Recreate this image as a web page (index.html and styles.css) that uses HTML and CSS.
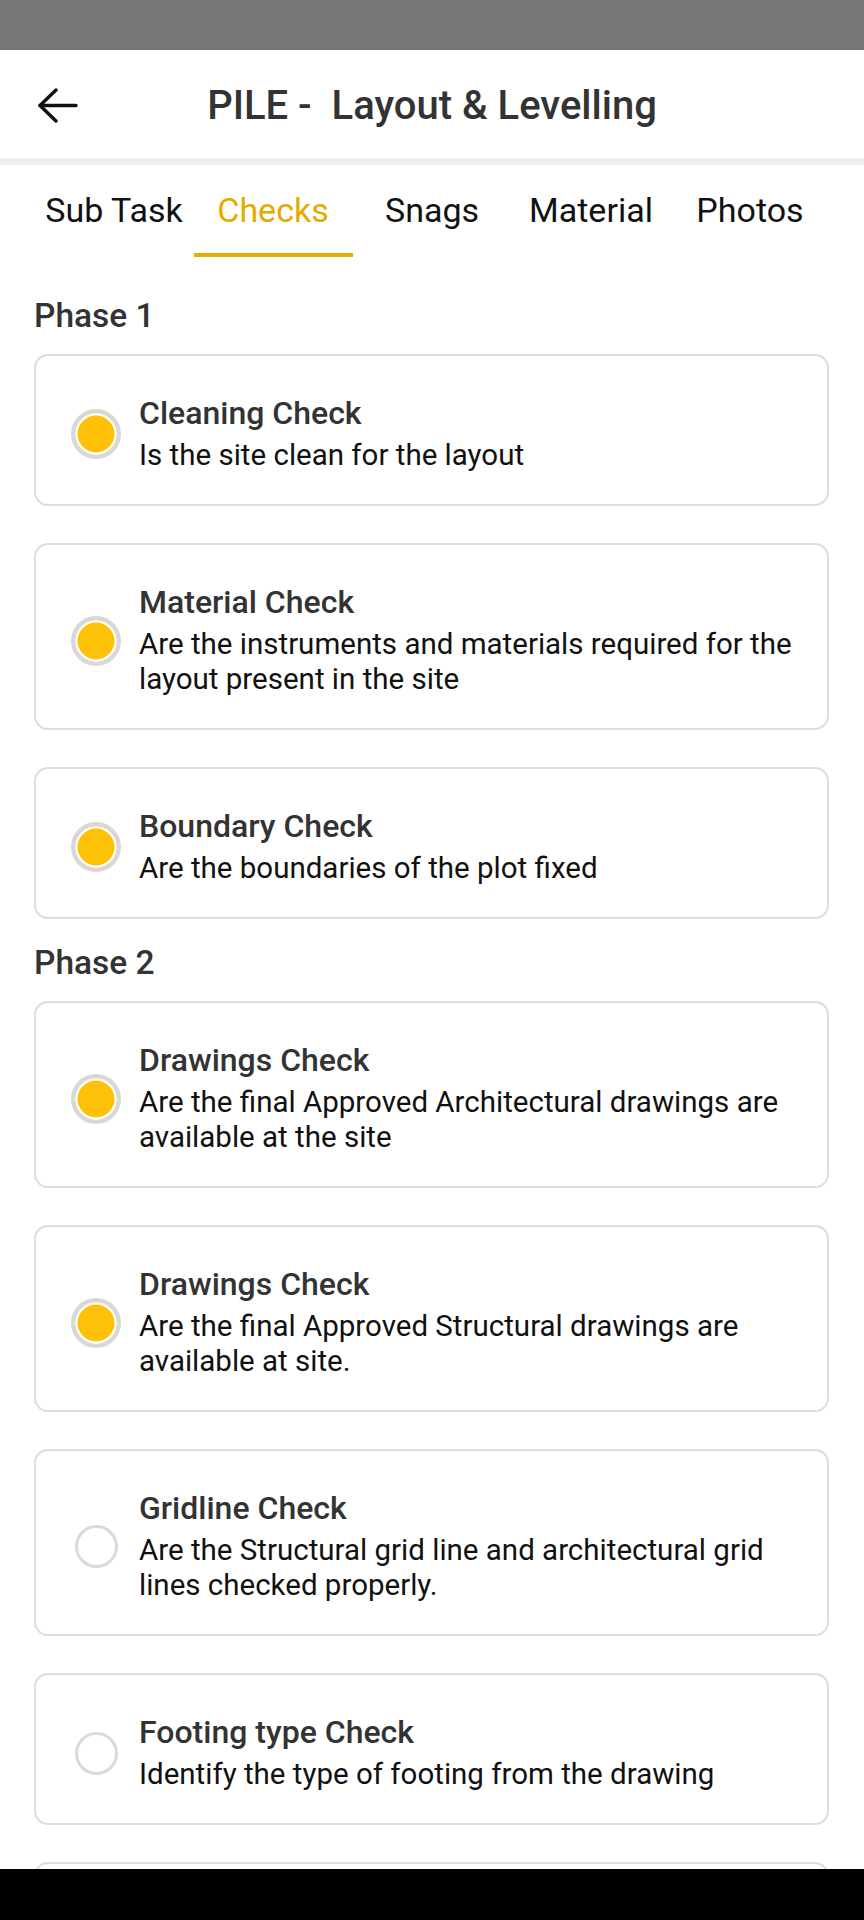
FILE: index.html
```html
<!DOCTYPE html>
<html lang="en">
<head>
<meta charset="utf-8">
<title>PILE - Layout &amp; Levelling</title>
<link rel="stylesheet" href="styles.css">
</head>
<body>
<div class="screen">
  <div class="status-bar"></div>
  <header class="app-bar">
    <button class="back" aria-label="Back">
      <svg width="40" height="36" viewBox="0 0 40 36" fill="none" stroke="#111" stroke-width="3.4" stroke-linecap="round" stroke-linejoin="round">
        <path d="M2 17.5H38"/>
        <path d="M18 2L2 17.5L18 33"/>
      </svg>
    </button>
    <h1 class="title">PILE -&nbsp; Layout &amp; Levelling</h1>
    <span class="spacer"></span>
  </header>
  <div class="divider"></div>
  <nav class="tabs">
    <a class="tab">Sub Task</a>
    <a class="tab active">Checks</a>
    <a class="tab">Snags</a>
    <a class="tab">Material</a>
    <a class="tab">Photos</a>
  </nav>
  <main class="content">
    <section class="phase">
      <h2 class="phase-title">Phase 1</h2>
      <div class="cards">
        <div class="card">
          <span class="radio checked"></span>
          <div class="card-text">
            <div class="card-title">Cleaning Check</div>
            <div class="card-desc">Is the site clean for the layout</div>
          </div>
        </div>
        <div class="card">
          <span class="radio checked"></span>
          <div class="card-text">
            <div class="card-title">Material Check</div>
            <div class="card-desc">Are the instruments and materials required for the layout present in the site</div>
          </div>
        </div>
        <div class="card">
          <span class="radio checked"></span>
          <div class="card-text">
            <div class="card-title">Boundary Check</div>
            <div class="card-desc">Are the boundaries of the plot fixed</div>
          </div>
        </div>
      </div>
    </section>
    <section class="phase">
      <h2 class="phase-title">Phase 2</h2>
      <div class="cards">
        <div class="card">
          <span class="radio checked"></span>
          <div class="card-text">
            <div class="card-title">Drawings Check</div>
            <div class="card-desc">Are the final Approved Architectural drawings are available at the site</div>
          </div>
        </div>
        <div class="card">
          <span class="radio checked"></span>
          <div class="card-text">
            <div class="card-title">Drawings Check</div>
            <div class="card-desc">Are the final Approved Structural drawings are available at site.</div>
          </div>
        </div>
        <div class="card">
          <span class="radio"></span>
          <div class="card-text">
            <div class="card-title">Gridline Check</div>
            <div class="card-desc">Are the Structural grid line and architectural grid lines checked properly.</div>
          </div>
        </div>
        <div class="card">
          <span class="radio"></span>
          <div class="card-text">
            <div class="card-title">Footing type Check</div>
            <div class="card-desc">Identify the type of footing from the drawing</div>
          </div>
        </div>
        <div class="card card-empty"></div>
      </div>
    </section>
  </main>
  <div class="nav-bar"></div>
</div>
</body>
</html>
```

FILE: styles.css
```css
* {
  box-sizing: border-box;
}

html, body {
  margin: 0;
  padding: 0;
  background: #ffffff;
}

body {
  font-family: Roboto, "Noto Sans", "Liberation Sans", sans-serif;
  color: #111;
}

.screen {
  width: 864px;
  height: 1920px;
  display: flex;
  flex-direction: column;
  overflow: hidden;
  background: #fff;
}

.status-bar {
  height: 50px;
  flex: none;
  background: #777777;
}

.app-bar {
  height: 108px;
  flex: none;
  display: grid;
  grid-template-columns: 1fr auto 1fr;
  align-items: center;
  padding-top: 3px;
}

.back {
  justify-self: start;
  margin-left: 38px;
  padding: 0;
  border: 0;
  background: none;
  display: flex;
  width: 40px;
  height: 36px;
}

.title {
  margin: 0;
  font-size: 40px;
  line-height: 46px;
  font-weight: 500;
  color: #333;
  white-space: nowrap;
}

.divider {
  height: 7px;
  flex: none;
  background: #efefef;
}

.tabs {
  flex: none;
  display: flex;
  justify-content: center;
}

.tab {
  width: 159px;
  padding: 25px 0 23px;
  font-size: 34px;
  line-height: 40px;
  text-align: center;
  color: #111;
  border-bottom: 4px solid transparent;
  white-space: nowrap;
}

.tab.active {
  color: #e5aa00;
  border-bottom-color: #e6ac00;
}

.content {
  flex: 1;
  overflow: hidden;
  padding: 40px 35px 0 34px;
  display: flex;
  flex-direction: column;
  gap: 25px;
}

.phase-title {
  margin: 0 0 20px;
  font-size: 33.5px;
  line-height: 37px;
  font-weight: 500;
  color: #333;
}

.cards {
  display: flex;
  flex-direction: column;
  gap: 37px;
}

.card {
  display: flex;
  align-items: center;
  border: 2px solid #dddddd;
  border-radius: 14px;
  padding: 39px 20px 31px 35px;
}

.card-empty {
  height: 152px;
}

.radio {
  flex: none;
  width: 43px;
  height: 43px;
  margin: 3.5px 21.5px 3.5px 3.5px;
  border-radius: 50%;
  border: 3px solid #dadada;
}

.radio.checked {
  width: 50px;
  height: 50px;
  margin: 0 18px 0 0;
  border: 4px solid #d8d8d8;
  background: #ffc107;
  box-shadow: inset 0 0 0 2.5px #fff;
}

.card-text {
  display: flex;
  flex-direction: column;
  gap: 7px;
}

.card-title {
  font-size: 32px;
  line-height: 36px;
  font-weight: 500;
  color: #333;
}

.card-desc {
  font-size: 29.5px;
  line-height: 35px;
  color: #111;
}

.nav-bar {
  height: 51px;
  flex: none;
  background: #000;
}
```
